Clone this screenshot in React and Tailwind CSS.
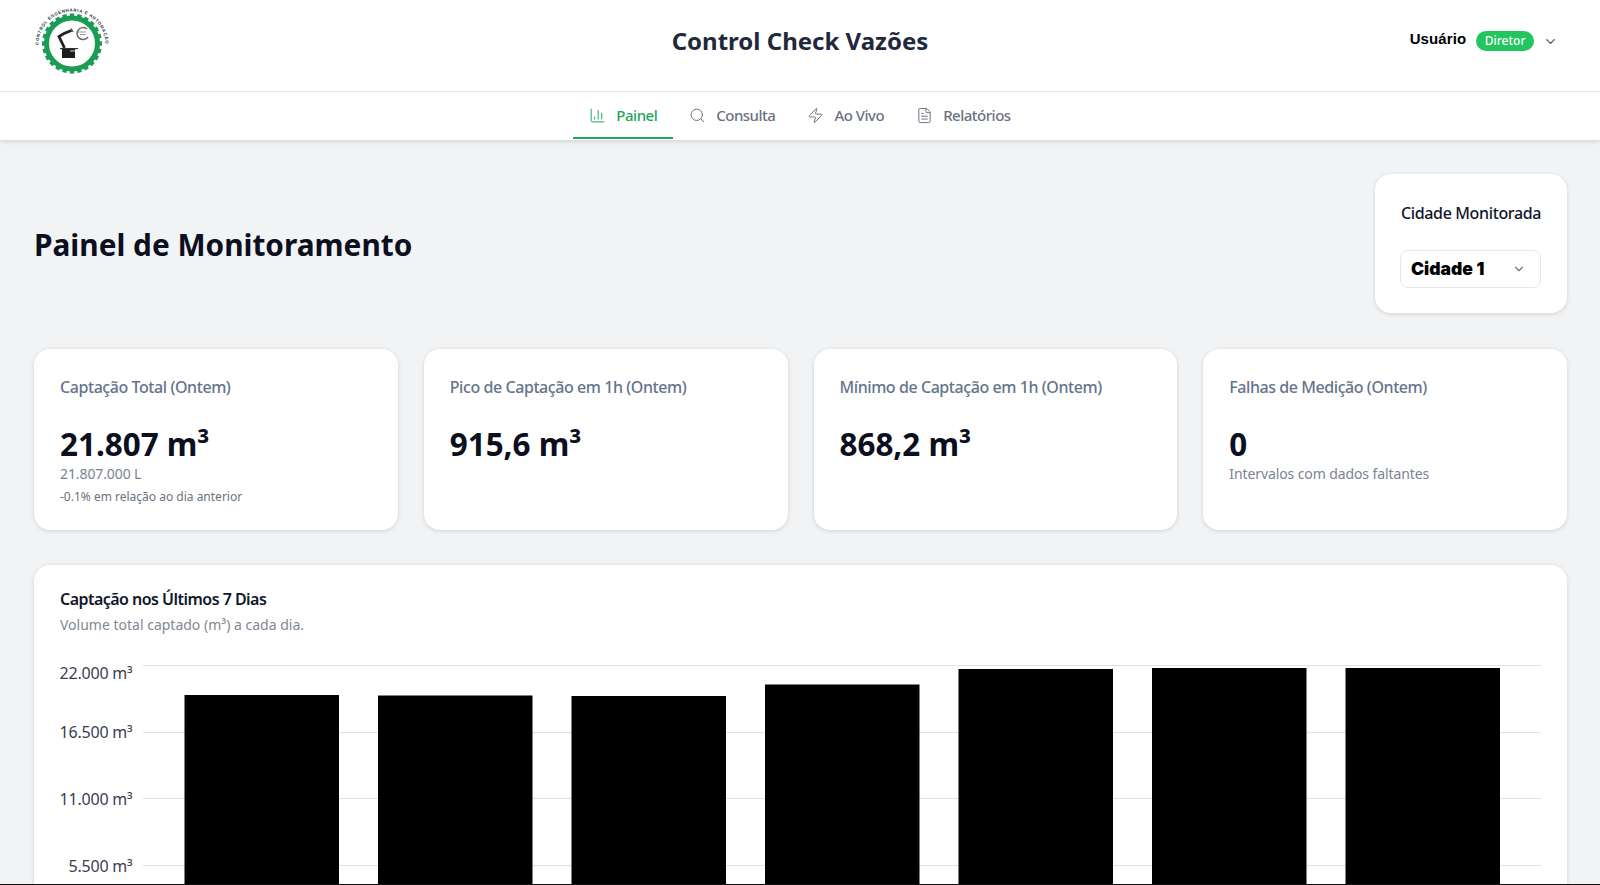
import React from "react";
import { ChartColumn, Search, Zap, FileText, ChevronDown } from "lucide-react";

const noto = "font-['Noto_Sans',sans-serif]";

function Logo() {
  const teeth = Array.from({ length: 24 }, (_, i) => i * 15);
  return (
    <svg width="84" height="84" viewBox="30 0 84 84" className="shrink-0">
      <defs>
        <path id="logoArc" d="M 38.5 45 A 33.5 33.5 0 1 1 105.5 45" />
      </defs>
      <g transform="translate(72 43.5)">
        {teeth.map((a) => (
          <rect key={a} x="-2.2" y="-30" width="4.4" height="4" fill="#1a9c55" transform={`rotate(${a})`} />
        ))}
        <circle r="25.5" fill="#fff" stroke="#1a9c55" strokeWidth="5" />
      </g>
      <text fontSize="4.4" fontWeight="700" fill="#2b2f36" fontFamily="Liberation Sans, sans-serif">
        <textPath href="#logoArc" textLength="104" lengthAdjust="spacing">CONTROL ENGENHARIA E AUTOMAÇÃO</textPath>
      </text>
      <path d="M64.5 48 L59 36.5 L64 33.5 L71.5 30.5" stroke="#222" strokeWidth="2.8" fill="none" />
      <path d="M71 28.5 l2 3.5" stroke="#555" strokeWidth="1.4" fill="none" />
      <rect x="62" y="49" width="13" height="9" fill="#1c1c1c" />
      <rect x="60" y="48" width="18" height="1.2" fill="#333" />
      <rect x="70" y="50" width="5" height="2" fill="#777" />
      <path d="M87 29 A6 6 0 1 0 88 37" fill="none" stroke="#666" strokeWidth="1.4" />
      <path d="M78 32 h8 M80 34.5 h6" stroke="#999" strokeWidth="1" fill="none" />
    </svg>
  );
}

const Tab = ({ Icon, label, active }) => (
  <div className={`flex items-center gap-[10px] px-4 h-[47px] pt-[2px] border-b-2 text-[15px] tracking-[-0.5px] font-medium ${active ? "border-[#22a45d] text-[#22a45d]" : "border-transparent text-[#6b7280]"}`}>
    <Icon size={17} strokeWidth={1.4} />
    <span>{label}</span>
  </div>
);

const Stat = ({ title, value, sub, note }) => (
  <div className="bg-white rounded-2xl shadow-[0_1px_4px_rgba(0,0,0,0.14)] h-[181px] px-[26px] pt-[26px]">
    <div className="text-[16px] tracking-[-0.43px] leading-[24px] font-medium text-[#64748b]">{title}</div>
    <div className="mt-[25px] text-[31.4px] leading-[40px] font-bold text-[#0b0f1e]">{value}</div>
    {sub && <div className="text-[14px] tracking-[-0.1px] leading-[20px] text-[#7b8390]">{sub}</div>}
    {note && <div className="mt-[4px] text-[12px] leading-[18px] text-[#6b7280]">{note}</div>}
  </div>
);

const bars = [695, 695.5, 696, 684.5, 669, 668, 668];

function Chart() {
  const labels = [["22.000 m³", 665, 679], ["16.500 m³", 732, 738], ["11.000 m³", 798, 805], ["5.500 m³", 865, 872]];
  return (
    <svg width="1482" height="250" viewBox="60 637 1482 250" className="block">
      {labels.map(([t, y, b]) => (
        <g key={t}>
          <line x1="143" x2="1541" y1={y + 0.5} y2={y + 0.5} stroke="#dfe1e5" />
          <text x="132.5" y={b} textAnchor="end" fontSize="16" letterSpacing="-0.2" fill="#374151" fontFamily="Noto Sans, sans-serif">{t}</text>
        </g>
      ))}
      {bars.map((top, i) => (
        <rect key={i} x={184.5 + i * 193.5} y={top} width="154.5" height={900 - top} fill="#000" />
      ))}
    </svg>
  );
}

export default function App() {
  return (
    <div className={`h-[885px] w-[1600px] overflow-hidden bg-[#f1f3f5] border-b border-[#111] ${noto}`}>
      <header className="h-[92px] bg-white border-b border-[#e5e7eb] flex items-start justify-between pl-[30px] pr-[42px] relative">
        <Logo />
        <div className="absolute left-0 right-0 top-[21px] text-center text-[24px] leading-[40px] font-bold text-[#1e293b]">Control Check Vazões</div>
        <div className="flex items-center gap-[10px] mt-[31px]">
          <span className="font-['Liberation_Sans',sans-serif] font-bold text-[15px] tracking-[0.1px] text-black -mt-[4px]">Usuário</span>
          <span className="bg-[#22c55e] text-white rounded-full text-[12px] leading-[20px] font-medium px-[8.5px]">Diretor</span>
          <ChevronDown size={15} className="text-[#4b5563] -ml-px" />
        </div>
      </header>
      <nav className="h-[48px] bg-white shadow-[0_2px_4px_rgba(0,0,0,0.12)] flex justify-center">
        <Tab Icon={ChartColumn} label="Painel" active />
        <Tab Icon={Search} label="Consulta" />
        <Tab Icon={Zap} label="Ao Vivo" />
        <Tab Icon={FileText} label="Relatórios" />
      </nav>
      <main className="pl-[34px] pr-[33px]">
        <div className="flex items-center justify-between pt-[34px]">
          <h1 className="text-[29.8px] leading-[40px] font-bold text-[#0b0f1e] mt-[2px]">Painel de Monitoramento</h1>
          <div className="w-[192px] h-[139px] bg-white rounded-2xl shadow-[0_1px_4px_rgba(0,0,0,0.14)] px-[26px] pt-[27px]">
            <div className="text-[16px] tracking-[-0.36px] leading-[24px] font-medium text-[#0f172a] whitespace-nowrap">Cidade Monitorada</div>
            <div className="mt-[25px] -ml-px h-[38px] border border-[#e5e7eb] rounded-lg flex items-center justify-between pl-[10px] pr-[14px]">
              <span className="font-['Inter',sans-serif] font-black text-[17.5px] text-black">Cidade 1</span>
              <ChevronDown size={14} className="text-[#6b7280]" />
            </div>
          </div>
        </div>
        <div className="grid grid-cols-4 gap-[26px] mt-[36px]">
          <Stat title="Captação Total (Ontem)" value="21.807 m³" sub="21.807.000 L" note="-0.1% em relação ao dia anterior" />
          <Stat title="Pico de Captação em 1h (Ontem)" value="915,6 m³" />
          <Stat title="Mínimo de Captação em 1h (Ontem)" value="868,2 m³" />
          <Stat title="Falhas de Medição (Ontem)" value="0" sub="Intervalos com dados faltantes" />
        </div>
        <section className="mt-[35px] bg-white rounded-2xl shadow-[0_1px_4px_rgba(0,0,0,0.14)] h-[400px] px-[26px] pt-[22px]">
          <div className="text-[16px] tracking-[-0.53px] leading-[24px] font-semibold text-[#0f172a]">Captação nos Últimos 7 Dias</div>
          <div className="text-[14px] leading-[24px] text-[#808894] mt-[2px]">Volume total captado (m³) a cada dia.</div>
          <Chart />
        </section>
      </main>
    </div>
  );
}
